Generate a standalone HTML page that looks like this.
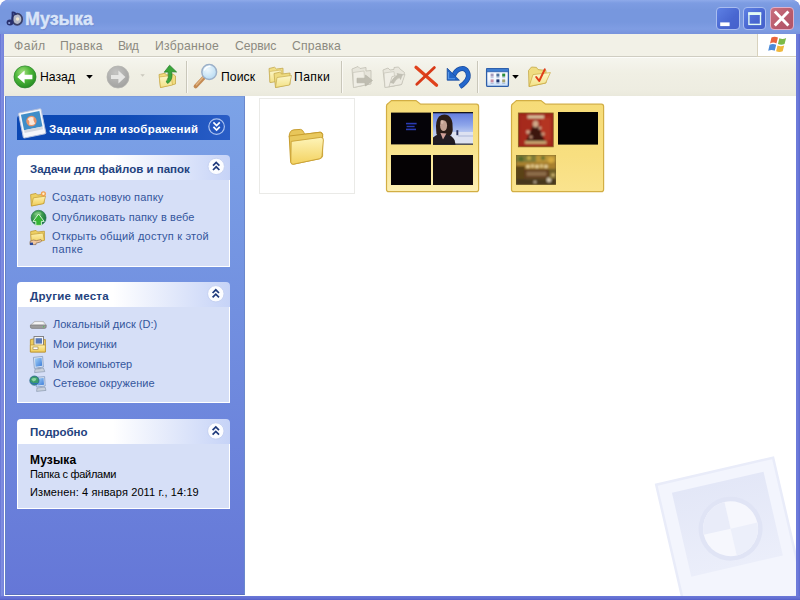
<!DOCTYPE html>
<html><head><meta charset="utf-8">
<style>
*{box-sizing:border-box;margin:0;padding:0}
html,body{width:800px;height:600px;overflow:hidden;background:#fff;font-family:"Liberation Sans",sans-serif;}
#win{position:absolute;left:0;top:0;width:800px;height:600px;background:linear-gradient(90deg,#6270d4 0,#7f8ee0 1.5px,#7482dc 4px,#6b79d8 5px,#6b79d8 796px,#6f7ddb 797px,#6674d6 799px,#5a66cc 800px);overflow:hidden;border-radius:8px 8px 0 0}
#title{position:absolute;left:0;top:0;width:800px;height:34px;background:linear-gradient(#8eaaea 0,#7d9ce2 3px,#7797de 10px,#7797de 22px,#7f9de3 29px,#7893dc 34px);border-radius:8px 8px 0 0}
#title .t{position:absolute;left:26px;top:7px;font-weight:bold;font-size:18px;color:#d9e5f9;white-space:nowrap;-webkit-text-stroke:0.45px #d9e5f9;text-shadow:0.5px 0.5px 1px rgba(80,100,180,0.5)}
.cb{position:absolute;top:6.7px;height:23.6px;border:1px solid #a9bdf0;border-radius:4px;background:linear-gradient(135deg,#5d80e4,#4866d0 60%,#4561cc)}
#menu{position:absolute;left:4px;top:34px;width:792px;height:23px;background:#f2f1e7;border-bottom:1px solid #cfcdc2}
#menu span{position:absolute;top:5px;font-size:12.2px;color:#8c8a80;white-space:nowrap}
#flag{position:absolute;left:757px;top:34px;width:39px;height:23px;background:#fff;border-left:1px solid #d8d2bd;border-bottom:1px solid #d8d2bd}
#tb{position:absolute;left:4px;top:57px;width:792px;height:39px;background:linear-gradient(#f5f5ee,#f0efe4 40%,#eeede1 85%,#eae9dc);border-top:1px solid #fdfdfa}
.sep{position:absolute;top:61px;width:2px;height:32px;border-left:1px solid #c9c7ba;border-right:1px solid #faf9f4}
.tt{position:absolute;top:70px;font-size:12.2px;color:#000;white-space:nowrap}
#side{position:absolute;left:5px;top:96px;width:240px;height:499px;background:linear-gradient(#7ca3e7,#6577d7);border-left:1px solid #6480c4;border-bottom:1px solid #5a70bc;border-top:1px solid #7a9adc;border-right:1px solid #6a88cc}
#bot{position:absolute;left:0;top:596px;width:800px;height:4px;background:linear-gradient(#6b79d8,#626ed2 60%,#5560c8)}
#main{position:absolute;left:4px;top:96px;width:792px;height:500px;background:#fff}
.lb{position:absolute;left:4px;top:96px;width:1px;height:500px;background:#fff}
.ph{position:absolute;left:17px;width:213px;height:25px;border-radius:4px 4px 0 0;background:linear-gradient(90deg,#fff 0,#fff 45%,#c6d3f7);}
.ph span,.ph0 span{position:absolute;font-weight:bold;font-size:11.5px;white-space:nowrap}
.ph span{left:12px;top:7px;color:#23427e}
.ph0{position:absolute;left:17px;top:115px;width:213px;height:25px;border-radius:4px 4px 0 0;background:linear-gradient(90deg,#0a47b3 0,#0f4bb6 50%,#2a5dc6)}
.ph0 span{left:33px;top:7px;color:#fff}
.pb{position:absolute;left:17px;width:213px;background:#d6dff7;border:1px solid #fff;border-top:0;font-size:11px;color:#34569c}
.pb span{position:absolute;left:35px;white-space:nowrap}
.chev{position:absolute;left:191px;width:17px;height:17px}
svg{position:absolute;overflow:visible}
/*FIT*/
#t_title{margin-left:-1.00px;margin-top:2.00px;letter-spacing:-0.040px}
#m1{margin-left:0.00px;margin-top:0.00px;letter-spacing:0.420px}
#m2{margin-left:0.00px;margin-top:0.00px;letter-spacing:0.288px}
#m3{margin-left:0.00px;margin-top:0.00px;letter-spacing:-0.540px}
#m4{margin-left:0.00px;margin-top:0.00px;letter-spacing:0.249px}
#m5{margin-left:1.00px;margin-top:0.00px;letter-spacing:-0.072px}
#m6{margin-left:0.00px;margin-top:0.00px;letter-spacing:0.180px}
#tt1{margin-left:0.00px;margin-top:0.00px;letter-spacing:0.000px}
#tt2{margin-left:0.00px;margin-top:0.00px;letter-spacing:0.090px}
#tt3{margin-left:-1.00px;margin-top:0.00px;letter-spacing:0.405px}
#h0{margin-left:-1.00px;margin-top:1.00px;letter-spacing:0.239px}
#h1{margin-left:1.00px;margin-top:1.00px;letter-spacing:0.000px}
#l1{margin-left:-1.00px;margin-top:1.00px;letter-spacing:0.190px}
#l2{margin-left:-1.00px;margin-top:1.00px;letter-spacing:0.128px}
#l3{margin-left:-1.00px;margin-top:0.00px;letter-spacing:0.208px}
#l4{margin-left:-1.00px;margin-top:0.00px;letter-spacing:0.450px}
#h2{margin-left:1.00px;margin-top:1.00px;letter-spacing:0.229px}
#l5{margin-left:0.00px;margin-top:1.00px;letter-spacing:0.000px}
#l6{margin-left:0.00px;margin-top:1.00px;letter-spacing:-0.108px}
#l7{margin-left:0.00px;margin-top:1.00px;letter-spacing:-0.075px}
#l8{margin-left:0.00px;margin-top:0.00px;letter-spacing:0.101px}
#h3{margin-left:1.00px;margin-top:0.00px;letter-spacing:0.000px}
#d1{margin-left:-1.00px;margin-top:0.00px;letter-spacing:0.144px}
#d2{margin-left:-1.00px;margin-top:2.00px;letter-spacing:-0.283px}
#d3{margin-left:-1.00px;margin-top:2.00px;letter-spacing:0.116px}
/*ENDFIT*/
</style></head><body>
<div id="win">
<div id="title"><div class="t" id="t_title">Музыка</div>
<div class="cb" style="left:716px;width:23.5px"></div>
<div class="cb" style="left:742.7px;width:23.6px"></div>
<div class="cb" style="left:769.5px;width:24px;background:linear-gradient(135deg,#c9707e,#b85a6c 60%,#b05468);border-color:#e0b0c8"></div>
</div>
<div id="menu"><span id="m1" style="left:10px">Файл</span><span id="m2" style="left:56px">Правка</span><span id="m3" style="left:114px">Вид</span><span id="m4" style="left:151px">Избранное</span><span id="m5" style="left:230px">Сервис</span><span id="m6" style="left:288px">Справка</span></div>
<div id="flag"></div>
<div id="tb"></div>
<div class="sep" style="left:186px"></div><div class="sep" style="left:341px"></div><div class="sep" style="left:477px"></div>
<div class="tt" id="tt1" style="left:40px">Назад</div>
<div class="tt" id="tt2" style="left:221px">Поиск</div>
<div class="tt" id="tt3" style="left:295px">Папки</div>

<!-- ICONS -->
<svg id="ticons" style="left:0;top:0" width="800" height="100" viewBox="0 0 800 100">
<defs>
<radialGradient id="gBack" cx="0.4" cy="0.3" r="0.75"><stop offset="0" stop-color="#a6e080"/><stop offset="0.45" stop-color="#4fb83a"/><stop offset="0.85" stop-color="#2e9628"/><stop offset="1" stop-color="#2a7f2a"/></radialGradient>
<radialGradient id="gFwd" cx="0.4" cy="0.3" r="0.75"><stop offset="0" stop-color="#c4c4c2"/><stop offset="0.6" stop-color="#aeaeac"/><stop offset="1" stop-color="#a0a09e"/></radialGradient>
<linearGradient id="gFold" x1="0" y1="0" x2="0" y2="1"><stop offset="0" stop-color="#fcf7cc"/><stop offset="1" stop-color="#f3e184"/></linearGradient>
<radialGradient id="gLens" cx="0.4" cy="0.35" r="0.7"><stop offset="0" stop-color="#eef8fd"/><stop offset="1" stop-color="#b6daf2"/></radialGradient>
<linearGradient id="gView" x1="0" y1="0" x2="0" y2="1"><stop offset="0" stop-color="#ffffff"/><stop offset="0.6" stop-color="#f4f8fe"/><stop offset="1" stop-color="#c4dcf8"/></linearGradient>
</defs>
<!-- title music icon -->
<g>
<ellipse cx="17.2" cy="19.2" rx="5" ry="5.6" fill="#b4b8c6" stroke="#3a4068" stroke-width="1.7"/>
<circle cx="17.6" cy="19" r="1.7" fill="#f0e8d0"/>
<ellipse cx="10" cy="22.5" rx="3.4" ry="3" fill="#27306e"/>
<path d="M12.5 22 L12.5 12.5 Q15 12 16 15" fill="none" stroke="#27306e" stroke-width="1.8"/>
<circle cx="9.2" cy="23" r="1.1" fill="#8fa0d8"/>
</g>
<!-- caption glyphs -->
<rect x="720.2" y="22.4" width="9.4" height="3.7" fill="#fff"/>
<rect x="748.9" y="13.2" width="11.6" height="11.2" fill="none" stroke="#e2fbf4" stroke-width="1.4"/><rect x="748.2" y="12.2" width="13" height="2.8" fill="#e2fbf4"/>
<path d="M774.8 11.6 L788.4 25.4 M788.4 11.6 L774.8 25.4" stroke="#fff" stroke-width="2.9" stroke-linecap="butt"/>
<!-- windows flag -->
<g transform="translate(768,35.6) scale(1.08 0.98)">
<path d="M3.2 2 Q6 0.2 9.2 2 L7.8 8 Q5 6.3 1.9 8 Z" fill="#e8643c"/>
<path d="M10.5 2.6 Q13.5 4.2 16.8 2.5 L15.3 8.6 Q12.2 10 9.2 8.5 Z" fill="#7cba48"/>
<path d="M1.5 9.4 Q4.6 7.6 7.6 9.4 L6.2 15.4 Q3.2 13.8 0.2 15.5 Z" fill="#4c8ad8"/>
<path d="M8.8 10 Q11.8 11.6 15 10 L13.6 16 Q10.6 17.6 7.5 16 Z" fill="#f0b83c"/>
</g>
<!-- back -->
<circle cx="25" cy="76.9" r="11" fill="url(#gBack)" stroke="#2f8a2e" stroke-width="0.8"/>
<path d="M17.3 77 L24.6 70.4 L24.6 74.8 L32.4 74.8 L32.4 79.2 L24.6 79.2 L24.6 83.6 Z" fill="#fff"/>
<path d="M86.2 75 L92.8 75 L89.5 78.8 Z" fill="#000"/>
<!-- forward -->
<circle cx="118" cy="77" r="11" fill="url(#gFwd)" stroke="#b4b4b0" stroke-width="0.8"/>
<path d="M125.4 77 L118.4 70.6 L118.4 74.9 L111 74.9 L111 79.1 L118.4 79.1 L118.4 83.4 Z" fill="#e6e6e4"/>
<path d="M140.4 74.2 L144.8 74.2 L142.6 76.8 Z" fill="#cbc9be"/>
<!-- up folder -->
<path d="M159 74.5 L165 73.2 L166.5 75 L173 74 L175.5 76 L175.5 84 L160.5 87.5 Z" fill="#f0dc80" stroke="#c4a848" stroke-width="0.8"/>
<path d="M160.5 87.5 L159.3 77 L171 75.5 L172.5 85 Z" fill="url(#gFold)" stroke="#c9a53c" stroke-width="0.6"/>
<path d="M168 83.5 Q173.5 79 171.6 71.8 L176.6 72 L169.6 65.2 L164.2 72.2 L168 71.9 Q169.6 77.5 166.2 82 Z" fill="#3aa63a" stroke="#247a28" stroke-width="0.7"/>
<!-- search -->
<path d="M203.6 77.8 L195.6 86.4" stroke="#c48a52" stroke-width="4" stroke-linecap="round"/>
<path d="M203.4 77.0 L196.4 84.8" stroke="#e2b582" stroke-width="1.4" stroke-linecap="round"/>
<circle cx="209.2" cy="72" r="7.4" fill="url(#gLens)" stroke="#9cb0c8" stroke-width="1.5"/>
<path d="M204.5 70 Q206 66.5 210 66.2" stroke="#fff" stroke-width="1.4" fill="none" stroke-linecap="round"/>
<!-- folders -->
<path d="M269 68.5 L274.5 67.2 L276.5 69 L283 68.2 L283 80 L270 82.5 Z" fill="#f0de86" stroke="#c4aa50" stroke-width="0.8"/>
<path d="M270 82.5 L269.5 71.5 L281 70 L282 80.5 Z" fill="url(#gFold)" stroke="#c4aa50" stroke-width="0.6"/>
<path d="M274 73.5 L279.8 72.2 L281.8 74 L290 73 L290 84.5 L275.5 87.5 Z" fill="#eedb80" stroke="#c4aa50" stroke-width="0.8"/>
<path d="M275.5 87.5 L277 77.5 L291.5 75.5 L289.5 85 Z" fill="url(#gFold)" stroke="#c4aa50" stroke-width="0.7"/>
<!-- move to (gray) -->
<g opacity="0.78">
<path d="M352 69 L358 66.5 L360 68.5 L366 67.5 L366 71 L371 70.5 L371 84 L353.5 87.5 Z" fill="#e4e2d8" stroke="#b9b7aa" stroke-width="0.9"/>
<path d="M353.5 87.5 L353 72.5 L364 71 L365 85 Z" fill="#f0eee6" stroke="#bcbaae" stroke-width="0.7"/>
<path d="M357 78.2 L365.5 78.2 L365.5 75 L372.5 80.5 L365.5 86 L365.5 82.8 L357 82.8 Z" fill="#b2b0a4" stroke="#a3a194" stroke-width="0.6"/>
</g>
<!-- copy to (gray) -->
<g opacity="0.78">
<path d="M383 70 L388 68 L390 70 L394 69.4 L394 67.5 L398.5 67 L400 69 L404.5 72.5 L401.5 84.5 L385 87.5 Z" fill="#e6e4da" stroke="#b9b7aa" stroke-width="0.9"/>
<path d="M385 87.5 L384 73 L394 71.6 L395.5 85.5 Z" fill="#f1efe7" stroke="#bcbaae" stroke-width="0.7"/>
<path d="M389 86.8 L392 76.5 L405 74.5 L401.5 84.5 Z" fill="#eceae0" stroke="#b4b2a6" stroke-width="0.7"/>
<path d="M390.5 82.5 Q394 76.5 398 75.5 L397 73.6 L402.5 74.5 L400.5 79.5 L399.5 77.6 Q396 78.6 393.6 83.4 Z" fill="#b6b4a8" stroke="#a6a498" stroke-width="0.5"/>
</g>
<!-- delete X -->
<path d="M416 67.2 L436.6 85.2" stroke="#e0421c" stroke-width="3.2" stroke-linecap="round"/>
<path d="M434.4 67.6 L416.8 84.2" stroke="#d83a18" stroke-width="2.8" stroke-linecap="round"/>
<!-- undo -->
<path d="M453.4 76.2 C456 68.4 464.2 66 467.4 71.8 C470.4 77.8 465.600 83 460 86.8" stroke="#1a4c9e" stroke-width="4.8" fill="none" stroke-linecap="butt"/>
<path d="M453.4 76.2 C456 68.4 464.2 66 467.4 71.8 C470.4 77.8 465.600 83 460 86.8" stroke="#2468cc" stroke-width="3.4" fill="none" stroke-linecap="butt"/>
<path d="M447.2 68.2 L447.2 80.2 L459.4 80.2 Z" fill="#2266c8" stroke="#1a4c9e" stroke-width="0.8" stroke-linejoin="round"/>
<path d="M448.6 72 L448.6 78.8 L455 78.8" stroke="#5a9ae8" stroke-width="1.1" fill="none"/>
<!-- views -->
<rect x="486.6" y="68.6" width="21.8" height="17.8" rx="1.2" fill="url(#gView)" stroke="#2d5ea8" stroke-width="1.3"/>
<rect x="486.6" y="68.6" width="21.8" height="3.2" fill="#3f7ed0" stroke="#2d5ea8" stroke-width="0.8"/>
<rect x="490.6" y="73.6" width="3" height="3" fill="#a69cbc"/><rect x="496.4" y="73.6" width="3" height="3" fill="#52749e"/><rect x="502.2" y="73.6" width="3" height="3" fill="#2c8c3c"/>
<rect x="490.6" y="79.4" width="3" height="3" fill="#c88ea2"/><rect x="496.4" y="79.4" width="3" height="3" fill="#1e3670"/><rect x="502.2" y="79.4" width="3" height="3" fill="#a3a272"/>
<g fill="#9ab0d0"><rect x="490.6" y="77.4" width="3" height="0.7"/><rect x="496.4" y="77.4" width="3" height="0.7"/><rect x="502.2" y="77.4" width="3" height="0.7"/><rect x="490.6" y="83.2" width="3" height="0.7"/><rect x="496.4" y="83.2" width="3" height="0.7"/><rect x="502.2" y="83.2" width="3" height="0.7"/></g>
<path d="M512.2 75 L518.8 75 L515.5 78.8 Z" fill="#000"/>
<!-- folder options -->
<path d="M528.5 70.5 L531.5 67 L536.5 67.4 L538 69.6 L546 70.4 L546 83 L529 86.5 Z" fill="#f0dc80" stroke="#c4a848" stroke-width="0.8"/>
<path d="M529 86.5 L533 74.6 L550.4 72.6 L545.6 83 Z" fill="url(#gFold)" stroke="#c9a840" stroke-width="0.7"/>
<path d="M536.2 77 L539.2 81 L544.8 69.4" stroke="#e03c18" stroke-width="2" fill="none" stroke-linecap="round" stroke-linejoin="round"/>
</svg>
<div id="main"></div>
<div id="side"></div>
<div id="bot"></div>

<div class="ph0"><span id="h0">Задачи для изображений</span></div>

<div class="ph" style="top:155px"><span id="h1">Задачи для файлов и папок</span></div>
<div class="pb" style="top:180px;height:87px"><span id="l1" style="top:10px">Создать новую папку</span><span id="l2" style="top:30px">Опубликовать папку в вебе</span><span id="l3" style="top:50px">Открыть общий доступ к этой</span><span id="l4" style="top:63px">папке</span></div>

<div class="ph" style="top:282px"><span id="h2">Другие места</span></div>
<div class="pb" style="top:307px;height:96px"><span id="l5" style="top:10px">Локальный диск (D:)</span><span id="l6" style="top:30px">Мои рисунки</span><span id="l7" style="top:50px">Мой компьютер</span><span id="l8" style="top:70px">Сетевое окружение</span></div>

<div class="ph" style="top:419px"><span id="h3">Подробно</span></div>
<div class="pb" style="top:444px;height:65px;color:#000"><span id="d1" style="left:13px;top:9px;font-weight:bold;font-size:12px">Музыка</span><span id="d2" style="left:13px;top:22px">Папка с файлами</span><span id="d3" style="left:13px;top:40px">Изменен: 4 января 2011 г., 14:19</span></div>



<!-- MAINART -->
<svg id="mart" style="left:245px;top:96px;overflow:hidden" width="551" height="500" viewBox="245 96 551 500">
<defs>
<linearGradient id="gBig" x1="0" y1="0" x2="0" y2="1"><stop offset="0" stop-color="#f6dc78"/><stop offset="0.5" stop-color="#f8e28a"/><stop offset="1" stop-color="#fcefb4"/></linearGradient>
<linearGradient id="gBig2" x1="0" y1="0" x2="0" y2="1"><stop offset="0" stop-color="#f6dc78"/><stop offset="0.6" stop-color="#f8df80"/><stop offset="1" stop-color="#fae38e"/></linearGradient>
<linearGradient id="gSm" x1="0" y1="0" x2="0" y2="1"><stop offset="0" stop-color="#fef4b8"/><stop offset="1" stop-color="#f3d260"/></linearGradient>
<linearGradient id="gSky" x1="0" y1="0" x2="0" y2="1"><stop offset="0" stop-color="#6079dc"/><stop offset="0.4" stop-color="#8ea6ea"/><stop offset="0.62" stop-color="#b8c8f0"/><stop offset="1" stop-color="#ccd6ee"/></linearGradient>
<linearGradient id="gWm" x1="0" y1="0" x2="0" y2="1"><stop offset="0" stop-color="#e3e7f7"/><stop offset="1" stop-color="#ebeefa"/></linearGradient>
<filter id="bl1" x="-20%" y="-20%" width="140%" height="140%"><feGaussianBlur stdDeviation="0.9"/></filter>
<filter id="bl3" x="-20%" y="-50%" width="140%" height="200%"><feGaussianBlur stdDeviation="0.35"/></filter>
<filter id="bl2" x="-20%" y="-20%" width="140%" height="140%"><feGaussianBlur stdDeviation="0.5"/></filter>
</defs>
<!-- watermark -->
<g transform="translate(3.5 7.5) rotate(-13 726 528)" opacity="1">
<rect x="666" y="462" width="120" height="140" fill="#f3f5fd" stroke="#e9ecf9" stroke-width="2.5"/>
<rect x="679.5" y="473.5" width="94" height="86" fill="url(#gWm)"/>
<circle cx="728.6" cy="521.6" r="32" fill="#e0e4f5"/>
<circle cx="728.6" cy="521.6" r="27.5" fill="#f6f7fd"/>
<path d="M728.6 494.1 A27.5 27.5 0 0 0 701.1 521.6 L728.6 521.6 Z" fill="#e9ecf9"/>
<path d="M728.6 521.6 L756.1 521.6 A27.5 27.5 0 0 1 728.6 549.1 Z" fill="#eceffa"/>
</g>
<!-- thumb 1 -->
<rect x="259.5" y="98.5" width="95" height="95" fill="#fff" stroke="#eaeae7" stroke-width="1"/>
<path d="M289.2 136 Q289.4 130.4 294 129.8 L300.6 129.4 Q302.6 129.6 303.8 132.4 L304.6 134.2 L320.4 132.2 Q322.4 132.4 322.6 134.2 L322.6 137 L290 141 Z" fill="#e8c65a" stroke="#c89e30" stroke-width="1"/>
<path d="M289.2 136 L290.6 161.6 Q291 164.6 293.6 164.2 L320.2 158.6 Q322.4 158 322.6 155.6 L322.6 134.4 L320.4 132.2 L304.6 134.2 L289.2 136Z" fill="#e9c95e" stroke="#c89e30" stroke-width="1"/>
<path d="M291.2 141.4 L320.6 137.4 Q323.6 137.2 323.4 140 L322 155.8 Q321.8 158.2 319.4 158.8 L293.4 164.2 Q291 164.6 290.8 162 Z" fill="url(#gSm)" stroke="#c9a236" stroke-width="0.9"/>
<!-- thumb 2 -->
<path d="M386.5 106 Q386.5 104.4 388 103.6 L391.4 100.6 L416 100.6 L420.6 104.2 L476.4 104.2 Q478.6 104.4 478.6 106.6 L478.6 189.4 Q478.6 191.6 476.4 191.6 L388.8 191.6 Q386.5 191.6 386.5 189.4 Z" fill="url(#gBig)" stroke="#d2ae44" stroke-width="1.2"/>
<rect x="391" y="112.6" width="40" height="31.8" fill="#050308"/>
<g fill="#2c3ab4" filter="url(#bl3)"><rect x="406" y="122.8" width="10.600" height="1.6"/><rect x="406.600" y="125.800" width="8" height="1.4"/><rect x="406" y="128.600" width="10" height="1.6"/></g>
<g>
<clipPath id="cp1"><rect x="433" y="112" width="40" height="32.8"/></clipPath>
<g clip-path="url(#cp1)">
<rect x="433" y="112" width="40" height="33" fill="url(#gSky)"/>
<rect x="452" y="132" width="21" height="12" fill="#dde2f1"/>
<rect x="458" y="135" width="15" height="2" fill="#c4cce4"/>
<g filter="url(#bl2)">
<path d="M436.200 131 Q435 121 439 116.400 Q443.600 113 448.400 115.600 Q453 119 452.600 127 Q453.400 133 450 136 L438 136 Q435.800 134 436.200 131Z" fill="#2c1e18"/>
<ellipse cx="443.600" cy="125.600" rx="3.500" ry="5.400" fill="#c2a090"/>
<ellipse cx="442" cy="122" rx="1.600" ry="2" fill="#d8b8a8"/>
<path d="M433 145 L433 137.500 Q437 133.600 441 134.600 L446.500 134.600 Q452 135.500 454.600 140 L455.600 145 Z" fill="#221c20"/>
<path d="M440.400 133 L443 139.600 L446.400 133.400 Z" fill="#d0a098"/>
<rect x="456.400" y="130.200" width="1.900" height="5" fill="#2a3260"/>
</g>
<rect x="433" y="112" width="40" height="1.300" fill="#14141e"/>
<rect x="433" y="143.600" width="40" height="1.300" fill="#14141e"/>
</g></g>
<rect x="391" y="155" width="40" height="30" fill="#050204"/>
<rect x="433" y="155" width="40" height="30" fill="#120a0c"/>
<!-- thumb 3 -->
<path d="M511.5 106 Q511.5 104.4 513 103.6 L516.4 100.6 L541 100.6 L545.6 104.2 L601.4 104.2 Q603.6 104.4 603.6 106.6 L603.6 189.4 Q603.6 191.6 601.4 191.6 L513.8 191.6 Q511.5 191.6 511.5 189.4 Z" fill="url(#gBig2)" stroke="#d2ae44" stroke-width="1.2"/>
<rect x="558" y="112" width="40" height="32.6" fill="#020202"/>
<g>
<rect x="518.400" y="113" width="34.800" height="33.800" fill="#9a2418" stroke="#8a6428" stroke-width="0.9"/>
<g filter="url(#bl1)">
<rect x="520" y="114.600" width="31.600" height="30.600" fill="#a62a1c"/>
<rect x="541" y="118" width="10" height="22" fill="#b43424"/>
<path d="M535.600 119 L545 141 L526 141 Z" fill="#3c1410"/>
<ellipse cx="535.600" cy="124" rx="2.800" ry="3.600" fill="#d0a888"/>
<rect x="527.500" y="115.200" width="16.500" height="3.200" fill="#d8c4a0"/>
<rect x="525" y="141" width="21.500" height="3" fill="#c8a470"/>
<circle cx="528" cy="132" r="1.800" fill="#dcb898"/><circle cx="543" cy="134" r="1.800" fill="#d0a080"/><circle cx="531" cy="137" r="1.600" fill="#c89878"/><circle cx="540" cy="128" r="1.500" fill="#d8b090"/>
</g></g>
<g>
<clipPath id="cp2"><rect x="516" y="155" width="40" height="29.800"/></clipPath>
<g clip-path="url(#cp2)">
<rect x="516" y="155" width="40" height="30" fill="#6e5c26"/>
<g filter="url(#bl1)">
<rect x="516" y="155" width="40" height="8" fill="#7e7c38"/>
<rect x="536" y="155" width="20" height="9" fill="#b89438"/>
<rect x="516" y="162" width="40" height="7" fill="#a8802e"/>
<rect x="516" y="166" width="9" height="14" fill="#5a4218"/>
<rect x="524" y="169" width="25" height="9.500" fill="#5e3a1e"/>
<rect x="526.500" y="171.500" width="20" height="4.500" fill="#8c6c48"/>
<circle cx="528" cy="166.500" r="1.800" fill="#ecd8a0"/><circle cx="532.500" cy="166" r="1.800" fill="#e4cc90"/><circle cx="537" cy="166.500" r="1.800" fill="#ecd8a0"/><circle cx="541.500" cy="166" r="1.800" fill="#e0c888"/><circle cx="546" cy="166.500" r="1.800" fill="#e8d4a0"/>
<circle cx="521" cy="159" r="2.600" fill="#50682c"/><circle cx="529" cy="158" r="2" fill="#c8b048"/><circle cx="551" cy="160" r="3" fill="#d8ac40"/><circle cx="543" cy="158" r="2" fill="#5c7030"/>
<rect x="516" y="179" width="40" height="6" fill="#46381c"/>
<circle cx="549" cy="180" r="2.400" fill="#d0c4ac"/><circle cx="535" cy="182" r="1.600" fill="#b8a890"/><circle cx="553" cy="175" r="2" fill="#c8b070"/>
</g></g></g></g>
</svg>
<!-- SIDEICONS -->
<svg id="sicons" style="left:0;top:96px" width="250" height="504" viewBox="0 96 250 504">
<defs>
<linearGradient id="gF2" x1="0" y1="0" x2="0" y2="1"><stop offset="0" stop-color="#fdf2b0"/><stop offset="1" stop-color="#f0cb55"/></linearGradient>
<radialGradient id="gGlobe" cx="0.4" cy="0.3" r="0.8"><stop offset="0" stop-color="#6cc070"/><stop offset="0.6" stop-color="#2a8a44"/><stop offset="1" stop-color="#1a6a5a"/></radialGradient>
<linearGradient id="gMon" x1="0" y1="0" x2="1" y2="1"><stop offset="0" stop-color="#a8d4f8"/><stop offset="1" stop-color="#3a7ad8"/></linearGradient>
<radialGradient id="gChev" cx="0.5" cy="0.45" r="0.6"><stop offset="0" stop-color="#ffffff"/><stop offset="0.8" stop-color="#fbfcff"/><stop offset="1" stop-color="#dfe6f8"/></radialGradient>
</defs>
<!-- polaroid -->
<g transform="rotate(-11.5 32 123)">
<rect x="20.6" y="110.6" width="23" height="25.6" rx="1" fill="#f4f6fb" stroke="#b4c0dc" stroke-width="0.9"/>
<rect x="22.8" y="112.8" width="18.8" height="15.6" fill="#3f8dc8"/><rect x="22.8" y="128.4" width="18.8" height="3" fill="#d4d8e2"/>
<circle cx="31.8" cy="121" r="5.2" fill="#e6946a"/>
<path d="M28.4 118.4 Q31.2 115.8 34.8 118 Q33.2 120.4 35 124 Q31.8 125.800 28.800 123.800 Q30.600 121 28.400 118.400Z" fill="#fbe9dc"/>
</g>
<!-- chevron 0 -->
<circle cx="216.6" cy="126.6" r="7.8" fill="#2457c0" stroke="#aac2f0" stroke-width="1.2"/>
<path d="M213.4 122.4 L216.6 125.6 L219.8 122.4 M213.4 126.8 L216.6 130 L219.8 126.8" stroke="#fff" stroke-width="1.7" fill="none"/>
<!-- chevrons 1..3 -->
<g id="chv">
<circle cx="216.2" cy="166.4" r="8.2" fill="url(#gChev)" stroke="#c3cff0" stroke-width="0.9"/>
<path d="M213 165.6 L216.2 162.4 L219.4 165.6 M213 170 L216.2 166.8 L219.4 170" stroke="#1f3a7c" stroke-width="1.7" fill="none"/>
</g>
<g transform="translate(-0.4 127.4)"><circle cx="216.2" cy="166.4" r="8.2" fill="url(#gChev)" stroke="#c3cff0" stroke-width="0.9"/><path d="M213 165.6 L216.2 162.4 L219.4 165.6 M213 170 L216.2 166.8 L219.4 170" stroke="#1f3a7c" stroke-width="1.7" fill="none"/></g>
<g transform="translate(-0.4 264.6)"><circle cx="216.2" cy="166.4" r="8.2" fill="url(#gChev)" stroke="#c3cff0" stroke-width="0.9"/><path d="M213 165.6 L216.2 162.4 L219.4 165.6 M213 170 L216.2 166.8 L219.4 170" stroke="#1f3a7c" stroke-width="1.7" fill="none"/></g>
<!-- new folder -->
<path d="M30.6 194.6 L36 193.4 L37.6 195 L44 194.2 L44 203.4 L31.4 206 Z" fill="#edcf62" stroke="#c29b34" stroke-width="0.8"/>
<path d="M31.4 206 L33.4 197.8 L45.6 196.2 L43.6 203.6 Z" fill="url(#gF2)" stroke="#c29b34" stroke-width="0.7"/>
<circle cx="43.4" cy="193.8" r="2.6" fill="#f0a050"/><circle cx="43.4" cy="193.8" r="1.2" fill="#fff0c8"/>
<!-- publish globe -->
<circle cx="38.6" cy="217.8" r="7.5" fill="url(#gGlobe)" stroke="#1c6a48" stroke-width="0.6"/>
<path d="M34 214 Q37 211.4 41 212.4 Q42.4 214.6 39.6 215.4 Q36 216.4 34 214Z" fill="#8ad08a" opacity="0.6"/>
<path d="M38.6 214 L44.2 221.4 L41.4 221.4 L41.4 225.4 L35.8 225.4 L35.8 221.4 L33 221.4 Z" fill="#36b436" stroke="#e0f8e0" stroke-width="0.9"/>
<!-- share folder -->
<path d="M30.6 231.6 L36 230.4 L37.6 232 L44.4 231.2 L44.4 240 L31.4 243 Z" fill="#edcf62" stroke="#c29b34" stroke-width="0.8"/>
<path d="M31.4 243 L30.8 234.6 L43 233 L44.4 240.4 Z" fill="url(#gF2)" stroke="#c29b34" stroke-width="0.7"/>
<path d="M30 241.4 Q33 239 36.6 240.6 L41 239.6 Q42.6 240.8 40.4 242 L36 243.2 L36 244.6 L30 244.6 Z" fill="#f0c8a0" stroke="#7a5a3a" stroke-width="0.6"/>
<rect x="30" y="242.6" width="3" height="2.4" fill="#2c4a9c"/>
<!-- local disk -->
<path d="M30.4 325.2 L34.6 321.4 L43.4 321.4 L46.2 325.2 Z" fill="#e4e4e4" stroke="#9a9a9a" stroke-width="0.6"/>
<path d="M30.4 325.2 L46.2 325.2 L46.2 327 Q46.200 328.400 44.600 328.400 L32 328.400 Q30.400 328.400 30.400 327 Z" fill="#9c9c9c" stroke="#707070" stroke-width="0.6"/>
<path d="M33.4 324 L35.6 322.2 L42.4 322.2 L43.800 324 Z" fill="#f6f6f6"/>
<circle cx="43.6" cy="326.8" r="0.7" fill="#58c058"/>
<!-- my pictures -->
<path d="M30.4 339.6 L35 338.6 L36.6 340 L45.4 339.6 L45.4 352 L30.4 352 Z" fill="#eccb5c" stroke="#b88f2c" stroke-width="0.8"/>
<rect x="34" y="336.6" width="9.6" height="9" fill="#f6f6f6" stroke="#6a6a6a" stroke-width="0.8"/>
<rect x="35.6" y="338.2" width="6.4" height="5.4" fill="#5a7ab8"/>
<path d="M30.4 352 L30.4 345 L45.4 345 L45.4 352 Z" fill="url(#gF2)" stroke="#b88f2c" stroke-width="0.7"/>
<rect x="33" y="347" width="5" height="2.6" fill="#fff" stroke="#806020" stroke-width="0.5"/>
<!-- my computer -->
<path d="M33.4 357.4 L42.6 356.4 L43.4 367 L34.4 368.4 Z" fill="#d8e4f4" stroke="#7890b8" stroke-width="0.7"/>
<path d="M34.8 358.6 L41.6 357.8 L42.2 365.8 L35.6 366.8 Z" fill="url(#gMon)"/>
<path d="M35 369.2 L43.4 368 L44.8 371.6 L34.6 372.6 Z" fill="#c8d0dc" stroke="#8090a8" stroke-width="0.6"/>
<rect x="37.6" y="367.6" width="3" height="1.6" fill="#98a4b8"/>
<!-- network -->
<path d="M35.6 377.4 L44.6 376.6 L45.2 386 L36.4 387 Z" fill="#d8e4f4" stroke="#7890b8" stroke-width="0.7"/>
<path d="M36.8 378.6 L43.6 378 L44 384.8 L37.4 385.6 Z" fill="url(#gMon)"/>
<path d="M37 388 L45 387 L46 390.4 L36.6 391.4 Z" fill="#c8d0dc" stroke="#8090a8" stroke-width="0.6"/>
<circle cx="34.4" cy="380.6" r="4.6" fill="#3c9c6c" stroke="#1c5c8c" stroke-width="0.7"/>
<path d="M31.4 379 Q34 377 36.6 378.6 Q36 381 33.6 381.4 Q32 380.6 31.4 379Z" fill="#8ad4a0"/>
<path d="M30.6 382.6 Q33.6 384.6 37.6 383.4" stroke="#2c6cc0" stroke-width="1" fill="none"/>
</svg>
</div>
</body></html>
